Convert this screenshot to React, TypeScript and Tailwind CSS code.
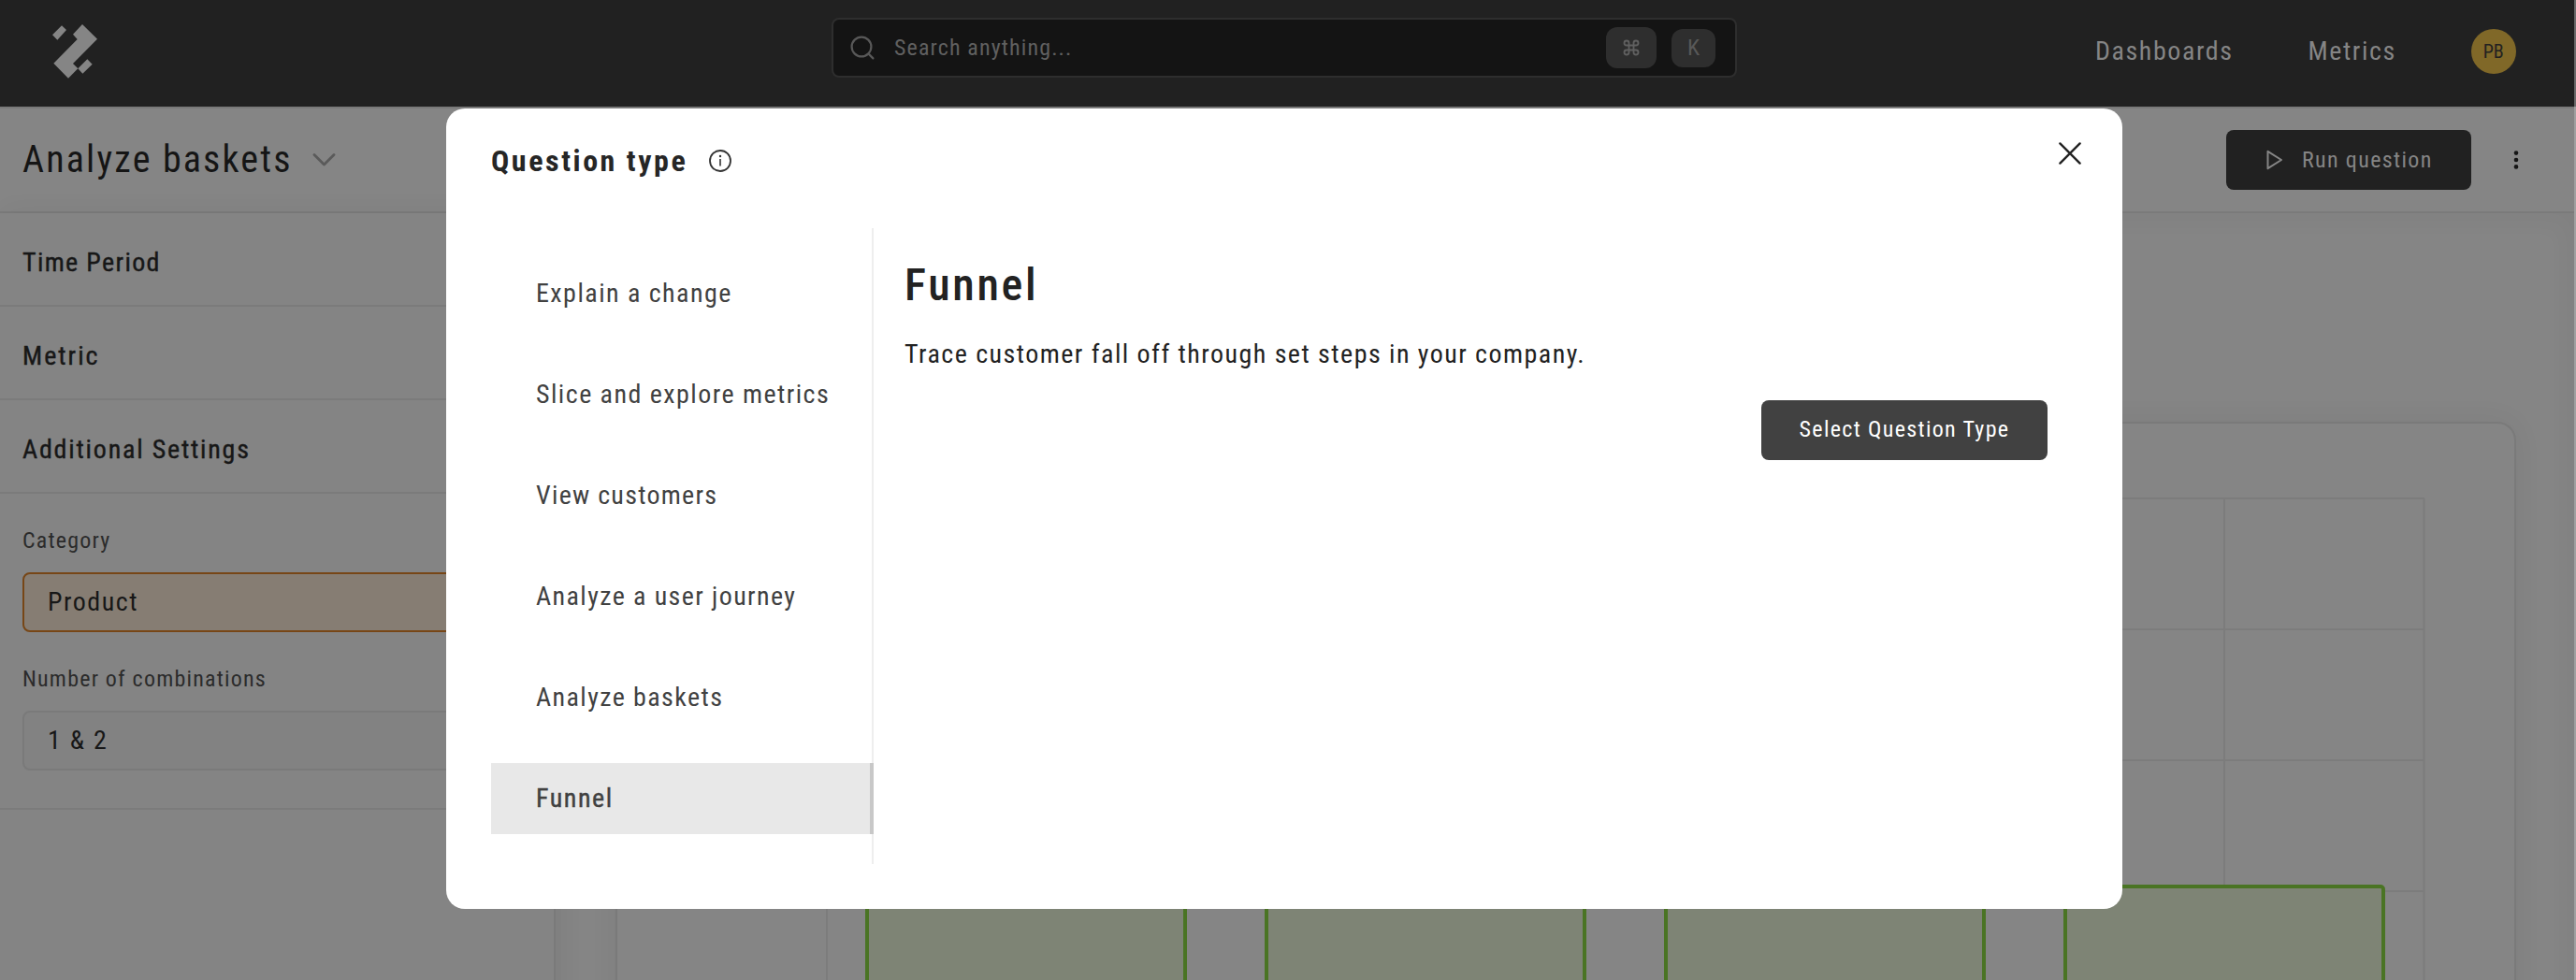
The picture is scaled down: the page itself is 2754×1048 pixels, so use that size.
import React from 'react';

const nav = [
  { label: 'Explain a change', tracking: 'tracking-[0.052em]' },
  { label: 'Slice and explore metrics', tracking: 'tracking-[0.052em]' },
  { label: 'View customers', tracking: 'tracking-[0.045em]' },
  { label: 'Analyze a user journey', tracking: 'tracking-[0.05em]' },
  { label: 'Analyze baskets', tracking: 'tracking-[0.05em]' },
  { label: 'Funnel', tracking: 'tracking-[0.056em]' },
];
const sections = [
  { label: 'Time Period', tracking: 'tracking-[0.048em]' },
  { label: 'Metric', tracking: 'tracking-[0.072em]' },
  { label: 'Additional Settings', tracking: 'tracking-[0.064em]' },
];
const bars = [925, 1352, 1779, 2206];

function Logo() {
  return (
    <svg width="48" height="58" viewBox="168 78 144 174" fill="#858585">
      <path d="M198 82l15 14-29 32-16-16zM264 78l48 47-78 79 16 16-31 31-47-48 76-77-14-16zM280 190l16 16-31 30-15-16z" />
    </svg>
  );
}

function Header() {
  return (
    <header className="flex h-[114px] w-[2752px] shrink-0 bg-[#212121]">
      <div className="w-[889px] pt-[26px] pl-14"><Logo /></div>
      <div className="mt-[19px] flex h-16 w-[968px] items-center rounded-lg border-2 border-[#2e2e2e] bg-[#141414] px-[18px]">
        <svg width="26" height="26" viewBox="0 0 26 26" fill="none" stroke="#585858" strokeWidth="2.2" strokeLinecap="round">
          <circle cx="12" cy="12" r="10.4" /><path d="M19.6 19.6L24.4 24.4" />
        </svg>
        <span className="ml-[21px] text-2xl tracking-[0.047em] text-[#606060]">Search anything...</span>
        <kbd className="ml-auto flex h-11 w-[54px] items-center justify-center rounded-xl bg-[#2e2e2e]">
          <svg width="20" height="20" viewBox="0 0 24 24" fill="none" stroke="#606060" strokeWidth="2.2"><path d="M15 6v12a3 3 0 1 0 3-3H6a3 3 0 1 0 3 3V6a3 3 0 1 0-3 3h12a3 3 0 1 0-3-3" /></svg>
        </kbd>
        <kbd className="mr-[3px] ml-4 flex h-[41px] w-[47px] items-center justify-center rounded-xl bg-[#2e2e2e] font-[Roboto_Condensed] text-2xl text-[#585858]">K</kbd>
      </div>
      <nav className="ml-[383px] flex h-[110px] items-center text-[28px] text-[#858585]">
        <span className="tracking-[0.056em]">Dashboards</span>
        <span className="ml-20 tracking-[0.056em]">Metrics</span>
        <span className="ml-[80px] flex size-12 items-center justify-center rounded-full bg-[#806828] text-xl text-[#212121]">PB</span>
      </nav>
    </header>
  );
}

function Toolbar() {
  return (
    <div className="flex h-[114px] shrink-0 items-center border-y-2 border-[#7a7a7a] pl-6">
      <h1 className="text-[40px] leading-none tracking-[0.054em] text-[#151515]">Analyze baskets</h1>
      <svg className="ml-[21px]" width="26" height="14" viewBox="0 0 26 14" fill="none" stroke="#5a5a5a" strokeWidth="2.8" strokeLinecap="round" strokeLinejoin="round"><path d="M2 1.6L12.5 12L23 1.6" /></svg>
      <button className="ml-auto flex h-16 w-[262px] items-center rounded-lg bg-[#212121] pl-[43px] text-2xl text-[#858585]">
        <svg width="18" height="22" viewBox="0 0 18 22" fill="none" stroke="#858585" strokeWidth="2" strokeLinejoin="round"><path d="M1.5 1.8L16 11L1.5 20.2z" /></svg>
        <span className="ml-5 tracking-[0.056em]">Run question</span>
      </button>
      <svg className="mr-[58px] ml-[44px]" width="8" height="20" viewBox="0 0 8 20" fill="#151515"><circle cx="4" cy="2.6" r="2.3" /><circle cx="4" cy="10" r="2.3" /><circle cx="4" cy="17.4" r="2.3" /></svg>
    </div>
  );
}

function Sidebar() {
  return (
    <aside className="z-10 w-[594px] shrink-0 border-r-2 border-[#7a7a7a] bg-[#848484] text-[28px] text-[#171717] shadow-[4px_0_28px_rgba(0,0,0,0.05)]">
      {sections.map((s) => (
        <div key={s.label} className="flex h-[100px] items-center border-b-2 border-[#7b7b7b] pt-2 pl-6 [-webkit-text-stroke:0.4px_#171717]"><span className={s.tracking}>{s.label}</span></div>
      ))}
      <div className="flex h-[338px] flex-col border-b-2 border-[#7b7b7b] px-6 pt-8">
        <label className="h-[52px] text-2xl leading-[36px] text-[#2b2b2b]"><span className="tracking-[0.05em]">Category</span></label>
        <div className="flex h-16 items-center rounded-lg border-2 border-[#774616] bg-[#867d73] pl-[25px]"><span className="tracking-[0.054em]">Product</span></div>
        <label className="mt-8 h-[52px] text-2xl leading-[36px] text-[#2b2b2b]"><span className="tracking-[0.05em]">Number of combinations</span></label>
        <div className="flex h-16 items-center rounded-lg border-2 border-[#7a7a7a] bg-[#828282] pl-[25px]"><span className="tracking-[0.064em]">1 &amp; 2</span></div>
      </div>
    </aside>
  );
}

function ChartCard() {
  return (
    <main className="flex-1 pt-[223px] pl-16 shadow-[inset_-8px_8px_24px_rgba(0,0,0,0.03)]">
      <section className="h-[700px] w-[2032px] rounded-[20px] border-2 border-[#7a7a7a] bg-[#858585] shadow-[0_0_32px_rgba(0,0,0,0.05)]">
        <svg className="block" width="2028" height="595" viewBox="660 453 2028 595" fill="none">
          <g stroke="#7c7c7c" strokeWidth="2">
            <path d="M883 533H2592M883 673H2592M883 813H2592M883 953H2592" />
            <path d="M884 533V1048M1097 533V946M1524 533V946M1951 533V946M2378 533V946M2591.5 533V1048" />
          </g>
          {bars.map((x) => <rect key={x} x={x + 2} y="948" width="340" height="140" rx="3" fill="#7e8475" stroke="#4a7424" strokeWidth="4" />)}
        </svg>
      </section>
    </main>
  );
}

function Modal() {
  return (
    <div className="absolute top-[116px] left-[477px] z-20 h-[856px] w-[1792px] rounded-[20px] bg-white">
      <div className="flex h-32 items-start pt-9 pl-12">
        <h2 className="text-[32px] leading-[40px] font-bold tracking-[0.08em] text-[#262626]">Question type</h2>
        <svg className="mt-2 ml-[23px]" width="24" height="24" viewBox="0 0 24 24" fill="none" stroke="#333" strokeWidth="1.8"><circle cx="12" cy="12" r="11" /><path d="M12 10v7.6" strokeWidth="1.6" /><circle cx="12" cy="7" r="1.2" fill="#333" stroke="none" /></svg>
        <svg className="mr-11 ml-auto" width="24" height="24" viewBox="0 0 24 24" fill="none" stroke="#222" strokeWidth="2.4" strokeLinecap="round"><path d="M1.4 1.4L22.6 22.6M22.6 1.4L1.4 22.6" /></svg>
      </div>
      <div className="flex h-[680px] pl-12">
        <ul className="flex w-[409px] flex-col gap-8 border-r-2 border-[#eee] pt-8 text-[28px] text-[#414141]">
          {nav.map(({ label, tracking }) => (
            <li key={label} className={label === 'Funnel' ? '-mr-0.5 flex h-[76px] items-center border-r-4 border-[#c8c8c8] bg-[#e8e8e8] pl-12 [-webkit-text-stroke:0.4px_#414141]' : 'flex h-[76px] items-center pl-12'}><span className={tracking}>{label}</span></li>
          ))}
        </ul>
        <div className="flex flex-1 flex-col pt-[33px] pr-20 pl-[33px] text-[#222]">
          <h3 className="text-[48px] leading-[56px] font-medium tracking-[0.056em]">Funnel</h3>
          <p className="mt-[26px] text-[28px] leading-[40px] tracking-[0.052em]">Trace customer fall off through set steps in your company.</p>
          <button className="mt-[29px] flex h-16 w-[306px] items-center justify-center self-end rounded-lg bg-[#414141] pb-0.5 text-2xl text-white"><span className="tracking-[0.055em]">Select Question Type</span></button>
        </div>
      </div>
    </div>
  );
}

export default function App() {
  return (
    <div className="relative h-[1048px] w-[2754px] overflow-hidden bg-[linear-gradient(#6a6a6a_114px,#a0a0a0_114px)] font-['Roboto_Condensed',Roboto,sans-serif]">
      <div className="flex h-full w-[2752px] flex-col bg-[#858585]">
        <Header />
        <Toolbar />
        <div className="flex flex-1"><Sidebar /><ChartCard /></div>
      </div>
      <Modal />
    </div>
  );
}
